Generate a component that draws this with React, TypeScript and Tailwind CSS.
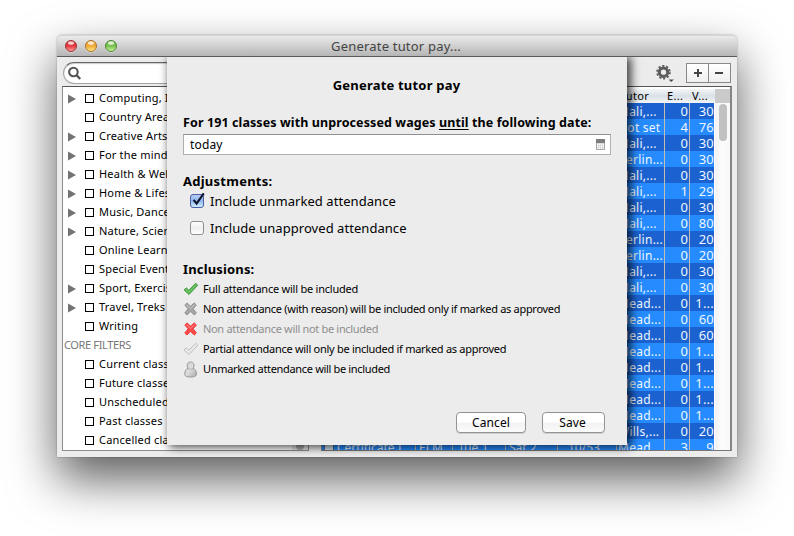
import React from "react";

const categories: { label: string; branch: boolean }[] = [
  { label: "Computing, IT", branch: true },
  { label: "Country Areas", branch: false },
  { label: "Creative Arts", branch: true },
  { label: "For the mind", branch: true },
  { label: "Health & Wellbeing", branch: true },
  { label: "Home & Lifestyle", branch: true },
  { label: "Music, Dance", branch: true },
  { label: "Nature, Science", branch: true },
  { label: "Online Learning", branch: false },
  { label: "Special Events", branch: false },
  { label: "Sport, Exercise", branch: true },
  { label: "Travel, Treks", branch: true },
  { label: "Writing", branch: false },
];

const coreFilters = [
  "Current classes",
  "Future classes",
  "Unscheduled",
  "Past classes",
  "Cancelled classes",
];

const rows: [string, string, string][] = [
  ["Mali,...", "0", "30"],
  ["Not set", "4", "76"],
  ["Mali,...", "0", "30"],
  ["Berlin...", "0", "30"],
  ["Mali,...", "0", "30"],
  ["Mali,...", "1", "29"],
  ["Mali,...", "0", "30"],
  ["Mali,...", "0", "80"],
  ["Berlin...", "0", "20"],
  ["Berlin...", "0", "20"],
  ["Mali,...", "0", "30"],
  ["Mali,...", "0", "30"],
  ["Mead...", "0", "1..."],
  ["Mead...", "0", "60"],
  ["Mead...", "0", "60"],
  ["Mead...", "0", "1..."],
  ["Mead...", "0", "1..."],
  ["Mead...", "0", "1..."],
  ["Mead...", "0", "1..."],
  ["Mead...", "0", "1..."],
  ["Wills,...", "0", "20"],
  ["Mead...", "3", "9"],
];

function FilterRow({ label, branch }: { label: string; branch: boolean }) {
  return (
    <li className="flex h-[19px] items-center">
      <span className="flex w-[22px] pl-[5px]">
        {branch && (
          <svg width="8" height="10" viewBox="0 0 8 10">
            <path d="M0 0.5 L8 5 L0 9.5 Z" fill="#737373" />
          </svg>
        )}
      </span>
      <span className="size-[9px] border border-black bg-white" />
      <span className="ml-[5px] text-[11px] leading-[17px] pb-[2px] tracking-[0.2px] whitespace-nowrap">{label}</span>
    </li>
  );
}

function TrafficLight({ id, edge, dark, light }: { id: string; edge: string; dark: string; light: string }) {
  return (
    <svg width="14" height="14" viewBox="0 0 14 14">
      <defs>
        <linearGradient id={id} x1="0" y1="0" x2="0" y2="1">
          <stop offset="0" stopColor={dark} />
          <stop offset="0.5" stopColor={dark} />
          <stop offset="1" stopColor={light} />
        </linearGradient>
      </defs>
      <circle cx="7" cy="7.8" r="6" fill="#fff" opacity="0.45" />
      <circle cx="7" cy="7" r="5.5" fill={`url(#${id})`} stroke={edge} strokeWidth="1" />
      <ellipse cx="7" cy="4" rx="3" ry="1.8" fill="#fff" opacity="0.75" />
    </svg>
  );
}

function Gear() {
  return (
    <svg width="19" height="18" viewBox="0 0 19 18">
      <circle cx="7.5" cy="7.2" r="4.2" fill="none" stroke="#5c5c5c" strokeWidth="3.1" />
      <circle cx="7.5" cy="7.2" r="6.3" fill="none" stroke="#5c5c5c" strokeWidth="1.9" strokeDasharray="2.1 1.858" />
      <path d="M12.6 14.4 h5.2 l-2.6 2.6 z" fill="#4a4a4a" />
    </svg>
  );
}

function Check({ fill, edge }: { fill: string; edge: string }) {
  return (
    <svg width="16" height="14" viewBox="0 0 16 14">
      <path
        d="M1 8 L3.2 5.8 L5.8 8.2 L12.6 1.3 L14.8 3.2 L6 12.6 Z"
        fill={fill}
        stroke={edge}
        strokeWidth="0.8"
        strokeLinejoin="round"
      />
      <path d="M2.6 7.6 L5.8 10 L13 2.9" fill="none" stroke="#fff" strokeOpacity="0.25" />
    </svg>
  );
}

function Cross({ fill, edge }: { fill: string; edge: string }) {
  return (
    <svg width="16" height="14" viewBox="0 0 16 14">
      <path
        d="M1.8 3 L4 0.9 L7.6 4.2 L11.2 0.9 L13.4 3 L10.1 6.8 L13.4 11 L11.2 13 L7.6 9.5 L4 13 L1.8 11 L5.1 6.8 Z"
        fill={fill}
        stroke={edge}
        strokeWidth="0.9"
        strokeLinejoin="round"
      />
      <path d="M3.6 2.6 L7.6 6.4 L11.6 2.6" fill="none" stroke="#fff" strokeOpacity="0.35" />
    </svg>
  );
}

function Person() {
  return (
    <svg width="15" height="17" viewBox="0 0 15 17">
      <defs>
        <linearGradient id="person" x1="0" y1="0" x2="1" y2="1">
          <stop offset="0" stopColor="#d2d2d2" />
          <stop offset="0.5" stopColor="#dcdcdc" />
          <stop offset="1" stopColor="#a8a8a8" />
        </linearGradient>
      </defs>
      <path
        d="M5 7.4 C3.2 4 4.4 1 7.6 1 C10.8 1 12 4 10.2 7.4 C12.6 8.4 13.4 10 13.4 13 C13.4 15.2 11.6 16 7.6 16 C3.6 16 1.8 15.2 1.8 13 C1.8 10 2.6 8.4 5 7.4 Z"
        fill="url(#person)"
        stroke="#989898"
      />
      <path d="M5.2 7.6 Q7.6 9.2 10 7.6" fill="none" stroke="#a6a6a6" strokeWidth="0.8" />
    </svg>
  );
}

function CalendarIcon() {
  return (
    <svg width="9" height="11" viewBox="0 0 9 11">
      <rect x="0.5" y="0.5" width="8" height="10" fill="#dcdcdc" stroke="#a8a8a8" />
      <rect width="9" height="4" fill="#7d7d7d" />
      <path d="M1 5.5h7M1 7.5h7M1 9.5h7" stroke="#fff" strokeDasharray="1 1" />
    </svg>
  );
}

function Inclusion({ icon, children, className }: { icon: React.ReactNode; children: React.ReactNode; className: string }) {
  return (
    <li className={`flex h-5 items-center text-[11px] whitespace-nowrap ${className}`}>
      <span className="flex w-5 items-center">{icon}</span>
      {children}
    </li>
  );
}

function PushButton({ children, className }: { children: React.ReactNode; className: string }) {
  return (
    <button
      className={`h-[21px] rounded-[4px] border border-[#939393] bg-linear-to-b from-white from-45% via-[#f3f3f3] via-55% to-[#fbfbfb] text-[12px] leading-[19px] tracking-[0.1px] shadow-[0_1px_0_rgba(0,0,0,0.12)] ${className}`}
    >
      {children}
    </button>
  );
}

function Sheet() {
  return (
    <div className="absolute inset-x-0 top-[22px] bottom-0 overflow-hidden">
      <section className="ml-[110px] flex h-[388px] w-[460px] flex-col bg-[#ececec] px-4 pt-[18px] shadow-[3px_1px_9px_1px_rgba(0,0,0,0.75)]">
        <h1 className="h-5 pr-[1px] text-center text-[13px] leading-5 font-bold tracking-[0.2px]">Generate tutor pay</h1>
        <p className="mt-[18px] h-5 text-[12.5px] leading-5 font-bold tracking-[0.1px] whitespace-nowrap">
          For 191 classes with unprocessed wages <span className="underline underline-offset-2">until</span> the following date:
        </p>
        <div className="mt-[1px] flex h-[21px] w-[428px] items-center justify-between border border-[#b0b0b0] border-t-[#8f8f8f] bg-white pr-[5px] pl-[6px] text-[12px] tracking-[0.15px]">
          <span>today</span>
          <CalendarIcon />
        </div>
        <h2 className="mt-[16px] h-5 text-[13px] leading-5 font-bold tracking-[0.25px]">Adjustments:</h2>
        <label className="flex h-5 items-center pl-[7px] text-[13px] leading-5 tracking-[0.06px]">
          <svg width="17" height="17" viewBox="0 0 17 17" className="-mt-[2px] mr-[3px]">
            <defs>
              <linearGradient id="checked" x1="0" y1="0" x2="0" y2="1">
                <stop offset="0" stopColor="#b8cdf2" />
                <stop offset="0.5" stopColor="#8fb8ee" />
                <stop offset="1" stopColor="#d3f2ff" />
              </linearGradient>
            </defs>
            <rect x="0.5" y="2.5" width="13" height="13" rx="2.5" fill="url(#checked)" stroke="#4d5da6" />
            <path d="M3.6 7.8 L6.6 11.6 L13.8 1.4" fill="none" stroke="#0d1226" strokeWidth="2.1" />
          </svg>
          Include unmarked attendance
        </label>
        <label className="mt-[7px] flex h-5 items-center pl-[7px] text-[13px] leading-5 tracking-[0.05px]">
          <span className="mr-[6px] size-[14px] rounded-[3px] border border-[#8f8f8f] bg-linear-to-b from-white via-[#efefef] to-white" />
          Include unapproved attendance
        </label>
        <h2 className="mt-[21px] h-5 text-[13px] leading-5 font-bold tracking-[0.15px]">Inclusions:</h2>
        <ul>
          <Inclusion icon={<Check fill="#55b74d" edge="#3c9236" />} className="tracking-[-0.23px]">
            Full attendance will be included
          </Inclusion>
          <Inclusion icon={<Cross fill="#a6a6a6" edge="#8c8c8c" />} className="tracking-[-0.305px]">
            Non attendance (with reason) will be included only if marked as approved
          </Inclusion>
          <Inclusion icon={<Cross fill="#fb4c4c" edge="#ee2f35" />} className="tracking-[-0.32px] text-[#8e8e8e]">
            Non attendance will not be included
          </Inclusion>
          <Inclusion icon={<Check fill="#e6e6e6" edge="#b5b5b5" />} className="tracking-[-0.28px]">
            Partial attendance will only be included if marked as approved
          </Inclusion>
          <Inclusion icon={<Person />} className="tracking-[-0.33px]">
            Unmarked attendance will be included
          </Inclusion>
        </ul>
        <div className="mt-[33px] flex justify-end gap-4 pr-[6px]">
          <PushButton className="w-[70px]">Cancel</PushButton>
          <PushButton className="w-[63px] pr-[2px]">Save</PushButton>
        </div>
      </section>
    </div>
  );
}

function TutorTable() {
  return (
    <div className="flex h-[365px] w-[411px] border-t border-r-2 border-b border-l border-t-[#555] border-r-[#858585] border-b-[#777] border-l-[#888] bg-white">
      <div className="mt-[2px] w-[393px] shrink-0 overflow-hidden">
        <div className="flex h-[14px] items-center bg-linear-to-b from-[#f4f6f8] via-[#d9e0e7] to-[#f6f6f6] text-[11px] leading-[12px] tracking-[0.3px]">
          <span className="w-[295px]" />
          <span className="w-[50px] pl-[3px]">Tutor</span>
          <span className="w-[25px]">E...</span>
          <span>V...</span>
        </div>
        <div className="h-[347px] w-[392px] overflow-hidden bg-white">
          {rows.map(([tutor, enrolled, value], i) => (
            <div
              key={i}
              className="flex h-4 text-[12px] leading-[17px] text-[#eef6ff] odd:bg-[#1b62d0] even:bg-[#258bff]"
            >
              <span className="flex w-[295px] border-r border-[#c4bdb0]">
                {i === rows.length - 1 && (
                  <>
                    <span className="mt-[1px] mr-[3px] ml-[2px] h-3 w-[10px] border border-[#4d6b8c] bg-[#cfe0e8]" />
                    <span className="w-[79px] border-r border-[#c4bdb0]">Certificate I</span>
                    <span className="w-[37px] border-r border-[#c4bdb0] pl-[3px]">ELM</span>
                    <span className="w-[53px] border-r border-[#c4bdb0] pl-[5px]">Tue 1</span>
                    <span className="w-[52px] border-r border-[#c4bdb0] pl-[3px]">Sat 2</span>
                    <span className="pl-[10px]">10/53</span>
                  </>
                )}
              </span>
              <span className="w-[48px] overflow-hidden border-r border-[#c4bdb0] pl-px leading-[18px] tracking-[0.25px] whitespace-nowrap">
                {tutor}
              </span>
              <span className="w-[25px] border-r border-[#c4bdb0] pr-px text-right text-[13px] leading-4">{enrolled}</span>
              <span className="w-[24px] text-right text-[13px] leading-4 tracking-[0.2px]">{value}</span>
            </div>
          ))}
        </div>
      </div>
      <div className="flex flex-1 flex-col">
        <div className="mt-[2px] h-[14px] bg-[#cacaca]" />
        <div className="flex flex-1 justify-center bg-linear-to-r from-[#f1f1f1] via-[#fdfdfd] to-[#f8f8f8]">
          <span className="mt-[1px] ml-[1px] h-[37px] w-2 rounded-full bg-[#c1c1c1]" />
        </div>
      </div>
    </div>
  );
}

export default function App() {
  return (
    <main className="h-[536px] w-[794px] overflow-hidden bg-white pt-[35px] pl-[57px] font-['Noto_Sans',sans-serif] text-black">
      <div className="relative flex h-[422px] w-[680px] flex-col rounded-t-[5px] bg-[#ececec] shadow-[0_22px_48px_rgba(0,0,0,0.64),0_0_2px_rgba(0,0,0,0.35)]">
        <header className="flex h-[22px] shrink-0 items-center rounded-t-[5px] border-t border-b border-t-[#d5d5d5] border-b-[#5a5a5a] bg-linear-to-b from-[#ebebeb] to-[#b5b5b5]">
          <div className="flex w-[68px] gap-[6px] pl-[7px]">
            <TrafficLight id="close" edge="#9b2f31" dark="#e2383e" light="#ffa8a0" />
            <TrafficLight id="minimise" edge="#a56f25" dark="#f0a93b" light="#fff08c" />
            <TrafficLight id="zoom" edge="#4a8635" dark="#78c050" light="#d0f7a0" />
          </div>
          <div className="flex-1 pr-[70px] text-center text-[13px] leading-5 tracking-[0.2px] text-[#444]">
            Generate tutor pay...
          </div>
        </header>

        <div className="flex flex-1">
          <aside className="w-[264px] pl-[5px]">
            <div className="mt-[5px] ml-[1px] flex h-[22px] w-[245px] items-center rounded-full border border-[#a5a5a5] border-t-[#666] bg-white pl-1 shadow-[inset_0_1px_1px_rgba(0,0,0,0.2)]">
              <svg width="14" height="14" viewBox="0 0 14 14">
                <circle cx="5.4" cy="6" r="4.3" fill="none" stroke="#555" strokeWidth="2.1" />
                <path d="M8.4 9 L12.2 13" stroke="#555" strokeWidth="2.4" />
              </svg>
            </div>
            <div className="mt-[2px] flex h-[365px] w-[247px] overflow-hidden border border-[#8c8c8c] border-t-[#555] bg-white">
              <ul className="flex-1 overflow-hidden pt-[2px]">
                {categories.map((c) => (
                  <FilterRow key={c.label} label={c.label} branch={c.branch} />
                ))}
                <li className="h-[19px] pl-px text-[11px] leading-[17px] tracking-[-0.36px] text-[#777]">CORE FILTERS</li>
                {coreFilters.map((label) => (
                  <FilterRow key={label} label={label} branch={false} />
                ))}
              </ul>
              <div className="flex w-4 items-end justify-center bg-[#e6e6e6]">
                <span className="h-[37px] w-2 rounded-full bg-[#a8a8a8]" />
              </div>
            </div>
          </aside>

          <div className="flex flex-1 flex-col">
            <div className="flex h-[29px] justify-end pr-[6px]">
              <div className="mt-[8px] mr-[11px]">
                <Gear />
              </div>
              <div className="mt-[6px] flex h-5 border border-[#888] bg-linear-to-b from-white to-[#efefef]">
                <button className="flex w-[22px] items-center justify-center border-r border-[#888]">
                  <svg width="8" height="8" viewBox="0 0 8 8">
                    <path d="M4 0v8M0 4h8" stroke="#444" strokeWidth="2" />
                  </svg>
                </button>
                <button className="flex w-[21px] items-center justify-center pr-[2px]">
                  <svg width="8" height="8" viewBox="0 0 8 8">
                    <path d="M0 4h8" stroke="#444" strokeWidth="2" />
                  </svg>
                </button>
              </div>
            </div>
            <TutorTable />
          </div>
        </div>

        <Sheet />
      </div>
    </main>
  );
}
